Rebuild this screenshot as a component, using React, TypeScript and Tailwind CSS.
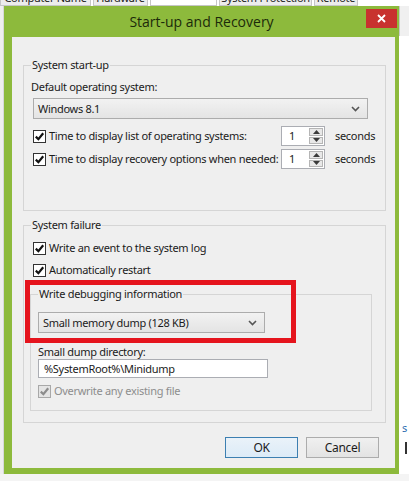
import React from 'react'

const ui = { fontFamily: '"Noto Sans", "Open Sans", sans-serif' }

function Check({ disabled = false }: { disabled?: boolean }) {
  return (
    <span
      className={
        'flex h-[13px] w-[13px] shrink-0 items-center justify-center border ' +
        (disabled ? 'border-[#a8a8a8] bg-[#e4e4e4]' : 'border-[#333333] bg-white')
      }
    >
      <svg width="11" height="11" viewBox="0 0 11 11">
        <path
          d="M1.8 5.6 L4.4 8.2 L9.2 2.2"
          fill="none"
          stroke={disabled ? '#8c8c8c' : '#111111'}
          strokeWidth="2.2"
        />
      </svg>
    </span>
  )
}

function CheckRow({ label, disabled = false }: { label: string; disabled?: boolean }) {
  return (
    <div className="flex h-[16px] items-center gap-[3px]">
      <Check disabled={disabled} />
      <span className={disabled ? 'text-[#8d8d8d]' : 'text-[#1b1b1b]'}>{label}</span>
    </div>
  )
}

function Chevron() {
  return (
    <svg width="9" height="6" viewBox="0 0 9 6">
      <path d="M1 1 L4.5 4.5 L8 1" fill="none" stroke="#555555" strokeWidth="1.6" />
    </svg>
  )
}

function Select({ value, width }: { value: string; width: string }) {
  return (
    <div
      className={
        'flex h-[21px] items-center justify-between border border-[#acacac] bg-gradient-to-b from-[#f2f2f2] to-[#e4e4e4] pl-[4px] pr-[7px] ' +
        width
      }
    >
      <span className="text-[#1b1b1b]">{value}</span>
      <Chevron />
    </div>
  )
}

function Spinner() {
  return (
    <div className="flex h-[20px] w-[44px] items-center border border-[#abadb3] bg-white pl-[7px] pr-[1px]">
      <span className="flex-1 text-[#1b1b1b]">1</span>
      <div className="flex h-[16px] w-[14px] flex-col gap-[1px]">
        <div className="flex flex-1 items-center justify-center border border-[#b5b5b5] bg-[#e8e8e8]">
          <svg width="7" height="4" viewBox="0 0 7 4">
            <path d="M0 4 L3.5 0 L7 4 Z" fill="#3a3a3a" />
          </svg>
        </div>
        <div className="flex flex-1 items-center justify-center border border-[#b5b5b5] bg-[#e8e8e8]">
          <svg width="7" height="4" viewBox="0 0 7 4">
            <path d="M0 0 L3.5 4 L7 0 Z" fill="#3a3a3a" />
          </svg>
        </div>
      </div>
    </div>
  )
}

function TimeRow({ label }: { label: string }) {
  return (
    <div className="flex h-[20px] items-center">
      <div className="flex w-[248px] items-center gap-[3px]">
        <Check />
        <span className="whitespace-nowrap text-[#1b1b1b]">{label}</span>
      </div>
      <Spinner />
      <span className="ml-[10px] text-[#1b1b1b]">seconds</span>
    </div>
  )
}

export default function App() {
  const tabs = [
    { label: 'Computer Name', w: 'w-[91px]' },
    { label: 'Hardware', w: 'w-[55px]' },
    { label: '', w: 'w-[67px]' },
    { label: 'System Protection', w: 'w-[93px]' },
    { label: 'Remote', w: 'w-[44px]' },
  ]

  return (
    <div
      className="flex h-[481px] w-[409px] flex-col overflow-hidden bg-[#f4f4f4] text-[11px] leading-[16px] tracking-[-0.3px]"
      style={ui}
    >
      {/* tabs of the window behind */}
      <div className="flex h-[6px] shrink-0 items-end gap-[2px] overflow-hidden bg-white">
        {tabs.map((t, i) => (
          <div
            key={i}
            className={
              'flex h-[16px] shrink-0 items-center justify-center whitespace-nowrap border border-[#c6c6c6] text-[#222] ' +
              t.w +
              (t.label ? ' bg-[#ececec]' : ' bg-white')
            }
          >
            {t.label}
          </div>
        ))}
      </div>

      <div className="flex">
        <div className="w-[4px] shrink-0 border-r border-[#d8d8d8] bg-[#efefef]" />

        {/* dialog */}
        <div className="w-[395px] shrink-0 bg-[#8dba3c]">
          <div className="grid h-[31px] grid-cols-[1fr_auto_1fr]">
            <div />
            <div
              className="flex items-center text-[14px] tracking-normal text-[#1c2a0a]"
              style={{ fontFamily: '"Open Sans", "Noto Sans", sans-serif' }}
            >
              Start-up and Recovery
            </div>
            <div className="flex items-start justify-end pr-[2px] pt-[3px]">
              <div className="flex h-[19px] w-[31px] items-center justify-center bg-[#c8322f]">
                <svg width="9" height="9" viewBox="0 0 9 9">
                  <path d="M1 1 L8 8 M8 1 L1 8" stroke="white" strokeWidth="1.8" />
                </svg>
              </div>
            </div>
          </div>

          <div className="pb-[6px] pl-[8px] pr-[4px]">
            <div className="relative flex h-[431px] w-[383px] flex-col bg-[#efefef]">
              {/* System start-up */}
              <fieldset className="ml-[11px] mt-[20px] h-[154px] w-[363px] border border-[#d5d5d5] pl-[7px] pr-[9px]">
                <legend className="px-[1px] text-[#1b1b1b]">System start-up</legend>
                <div className="mt-[6px] text-[#1b1b1b]">Default operating system:</div>
                <div className="ml-[2px] mt-[3px]">
                  <Select value="Windows 8.1" width="w-[335px]" />
                </div>
                <div className="ml-[2px] mt-[7px]">
                  <TimeRow label="Time to display list of operating systems:" />
                </div>
                <div className="ml-[2px] mt-[3px]">
                  <TimeRow label="Time to display recovery options when needed:" />
                </div>
              </fieldset>

              {/* System failure */}
              <fieldset className="ml-[11px] mt-[6px] h-[206px] w-[363px] border border-[#d5d5d5] pl-[7px] pr-[9px]">
                <legend className="px-[1px] text-[#1b1b1b]">System failure</legend>
                <div className="ml-[2px] mt-[7px]">
                  <CheckRow label="Write an event to the system log" />
                </div>
                <div className="ml-[2px] mt-[6px]">
                  <CheckRow label="Automatically restart" />
                </div>

                <fieldset className="ml-[-1px] mt-[8px] h-[125px] w-[342px] border border-[#d5d5d5] pl-[7px]">
                  <legend className="px-[1px] text-[#1b1b1b]">Write debugging information</legend>
                  <div className="mt-[10px]">
                    <Select value="Small memory dump (128 KB)" width="w-[227px]" />
                  </div>
                  <div className="mt-[11px] leading-[15px] text-[#1b1b1b]">Small dump directory:</div>
                  <div className="flex h-[19px] w-[230px] items-center border border-[#abadb3] bg-white pl-[5px] text-[#1b1b1b]">
                    %SystemRoot%\Minidump
                  </div>
                  <div className="mt-[5px]">
                    <CheckRow label="Overwrite any existing file" disabled />
                  </div>
                </fieldset>
              </fieldset>

              {/* buttons */}
              <div className="mt-[14px] flex justify-end gap-[8px] pr-[16px]">
                <button className="h-[21px] w-[73px] border border-[#3c7fb1] bg-gradient-to-b from-[#eaf2f9] to-[#dcebf7] text-[12px] text-[#1b1b1b]">
                  OK
                </button>
                <button className="h-[21px] w-[73px] border border-[#acacac] bg-gradient-to-b from-[#f0f0f0] to-[#e3e3e3] text-[12px] text-[#1b1b1b]">
                  Cancel
                </button>
              </div>

              {/* red annotation box */}
              <div className="pointer-events-none absolute left-[13px] top-[243px] h-[63px] w-[271px] border-[5px] border-[#e5141d]" />
            </div>
          </div>
        </div>

        <div className="flex w-[10px] shrink-0 flex-col bg-white">
          <div className="h-[30px] border-l border-[#c8c8c8] bg-[#f0f0f0]" />
          <div className="mt-[386px] pl-[3px] text-[11px] leading-[12px] text-[#2a6cb0]">s</div>
          <div className="ml-[6px] mt-[8px] h-[12px] w-[2px] bg-[#333]" />
        </div>
      </div>
    </div>
  )
}
